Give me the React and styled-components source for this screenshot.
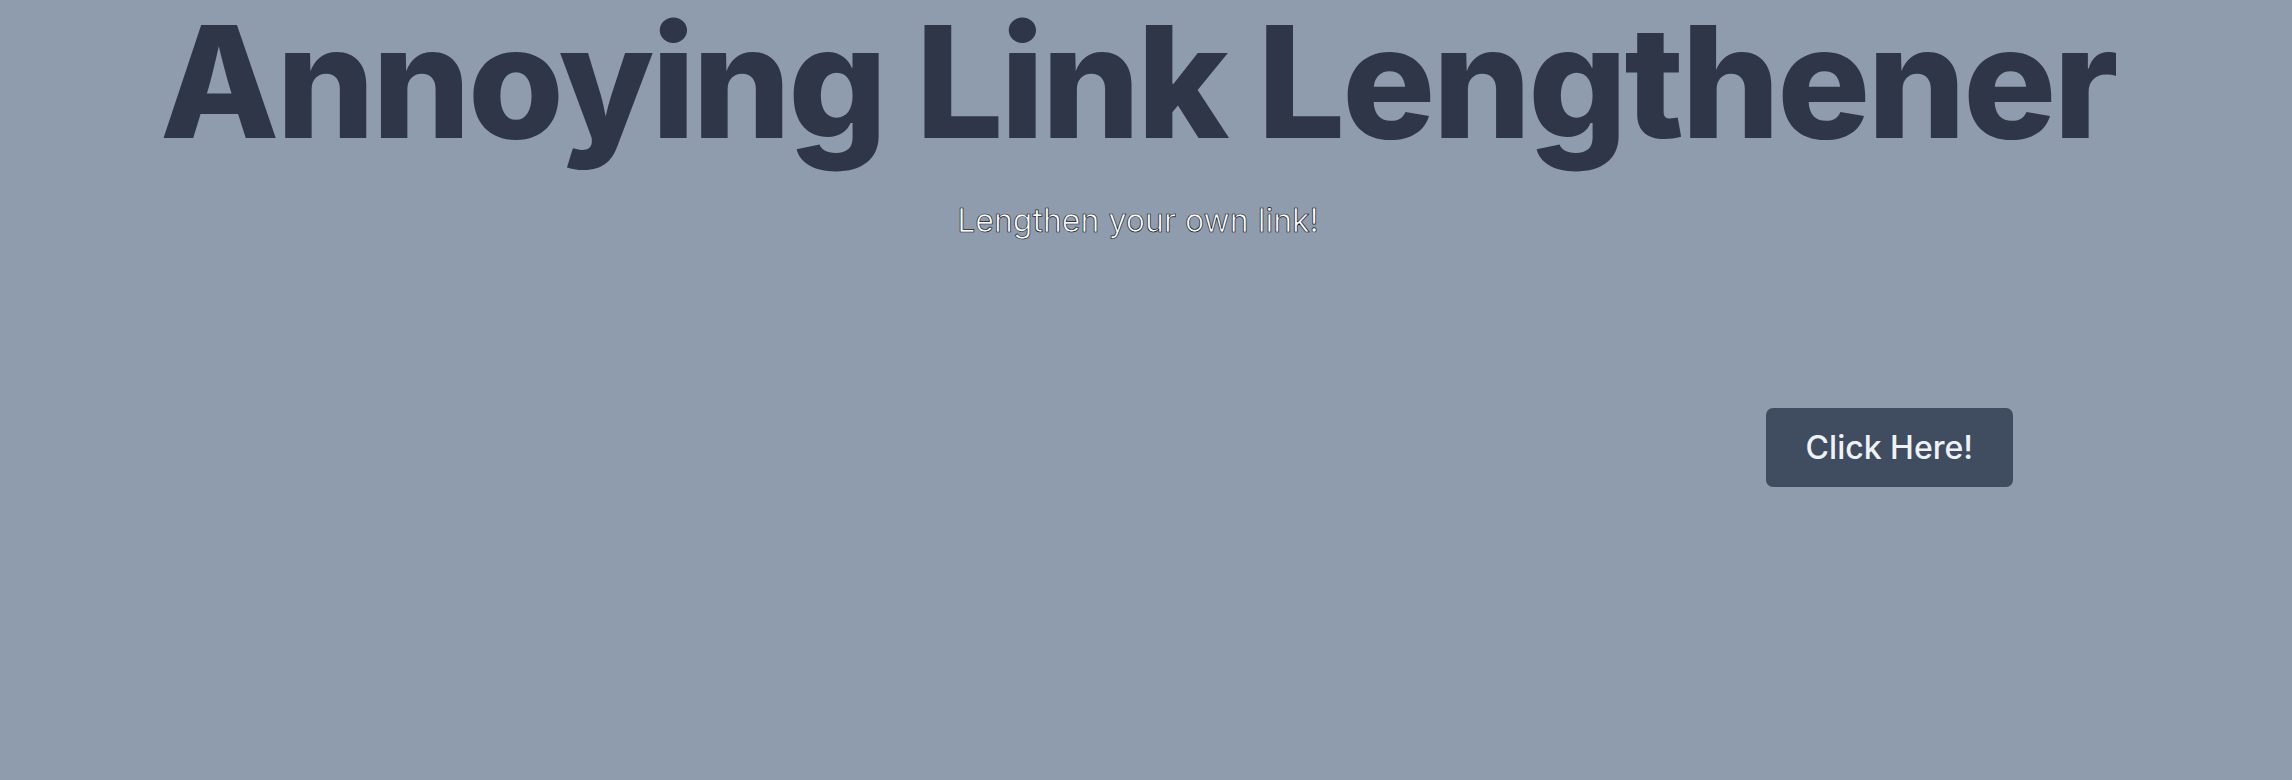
import styled, { createGlobalStyle } from 'styled-components';

const GlobalStyle = createGlobalStyle`
  html, body {
    margin: 0;
    padding: 0;
    background-color: #8f9cae;
  }

  body {
    font-family: Inter, "Noto Sans", sans-serif;
    min-height: 100vh;
  }
`;

const App = () => {
  return (
    <Page>
      <GlobalStyle />
      <Header>
        <Title>Annoying Link Lengthener</Title>
        <Subtitle>Lengthen your own link!</Subtitle>
      </Header>
      <ActionRow>
        <Button type="button">Click Here!</Button>
      </ActionRow>
    </Page>
  );
};

const Page = styled.main`
  display: flex;
  flex-direction: column;
  min-height: 100vh;
  padding-right: 16px;
  box-sizing: border-box;
`;

const Header = styled.header`
  display: flex;
  flex-direction: column;
  align-items: center;
`;

const Title = styled.h1`
  margin: 0;
  font-size: 155px;
  font-weight: 800;
  line-height: 1.06;
  letter-spacing: -0.018em;
  color: #2f3647;
  white-space: nowrap;
`;

const Subtitle = styled.p`
  margin: 37px 0 0;
  font-size: 32px;
  font-weight: 400;
  color: #ffffff;
  -webkit-text-stroke: 0.7px #0f131b;
`;

const ActionRow = styled.div`
  display: flex;
  justify-content: flex-end;
  padding: 0 263px 0 0;
  margin-top: 168px;
`;

const Button = styled.button`
  font-family: Inter, "Noto Sans", sans-serif;
  font-size: 32px;
  font-weight: 500;
  color: #eef2f7;
  background-color: #404c60;
  border: none;
  border-radius: 7px;
  padding: 0 40px;
  height: 79px;
  cursor: pointer;
`;

export default App;
